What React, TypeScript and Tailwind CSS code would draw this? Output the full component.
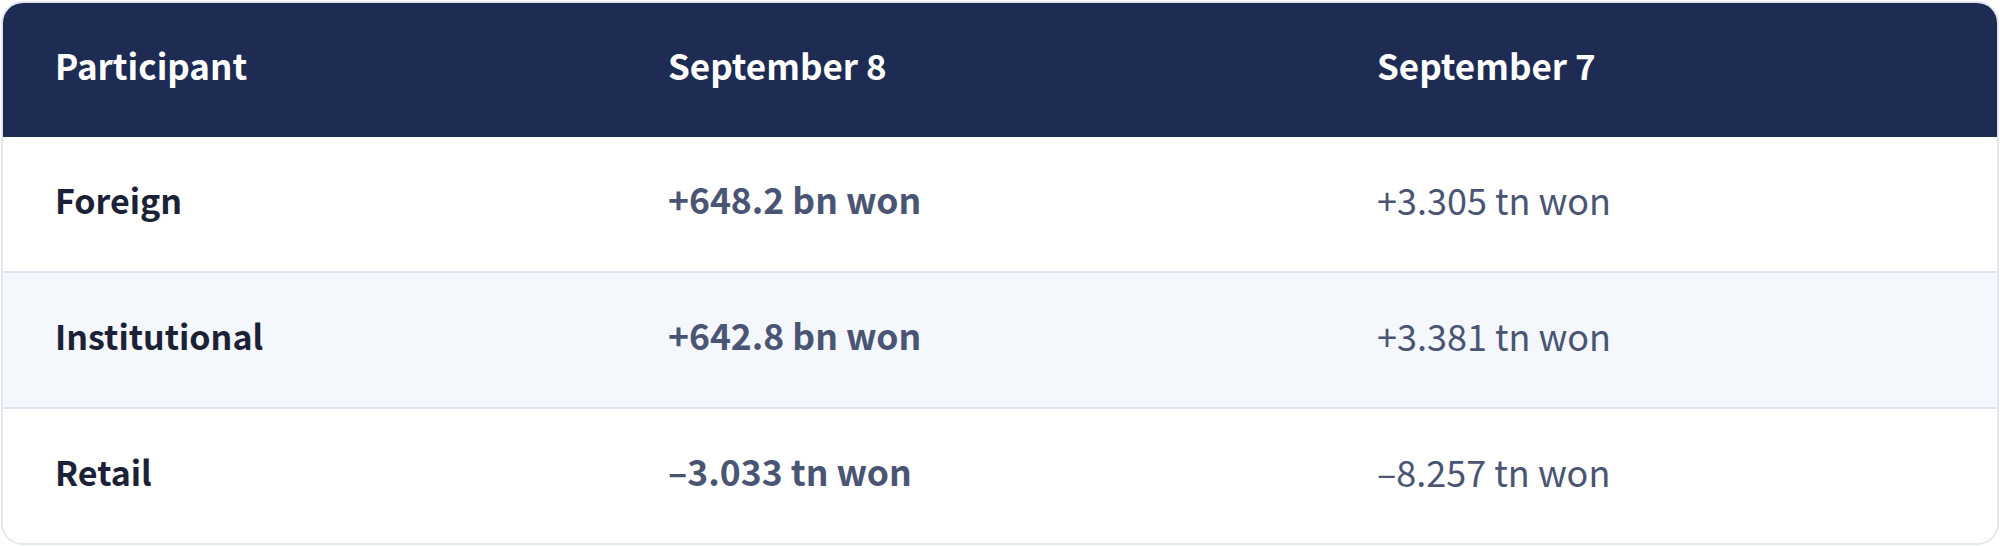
import React from "react";

interface Row {
  participant: string;
  sep8: string;
  sep7: string;
}

const rows: Row[] = [
  { participant: "Foreign", sep8: "+648.2 bn won", sep7: "+3.305 tn won" },
  { participant: "Institutional", sep8: "+642.8 bn won", sep7: "+3.381 tn won" },
  { participant: "Retail", sep8: "–3.033 tn won", sep7: "–8.257 tn won" },
];

const App = () => {
  return (
    <div
      className="w-[2000px] h-[546px] bg-white p-[1px]"
      style={{ fontFamily: '"Noto Sans CJK KR", "Noto Sans", sans-serif' }}
    >
      <div className="h-full rounded-[22px] border-2 border-[#e1e6f0] overflow-hidden flex flex-col">
        {/* Header */}
        <div className="grid grid-cols-[613px_709px_1fr] h-[134px] pb-[10px] bg-[#1e2b53] text-white font-bold text-[35px] items-center">
          <div className="px-[52px]">Participant</div>
          <div className="px-[52px]">September 8</div>
          <div className="px-[52px]">September 7</div>
        </div>

        {/* Rows */}
        {rows.map((row, i) => (
          <div
            key={row.participant}
            className={`grid grid-cols-[613px_709px_1fr] flex-1 items-center pb-[10px] ${
              i > 0 ? "border-t-2 border-[#dfe5f0]" : ""
            } ${i === 1 ? "bg-[#f4f7fc]" : "bg-white"}`}
          >
            <div className="px-[52px] font-bold text-[34px] text-[#1b2236]">{row.participant}</div>
            <div className="px-[52px] font-bold text-[35.5px] text-[#4a5573]">{row.sep8}</div>
            <div className="px-[52px] font-normal text-[36px] text-[#4a5573]">{row.sep7}</div>
          </div>
        ))}
      </div>
    </div>
  );
};

export default App;
